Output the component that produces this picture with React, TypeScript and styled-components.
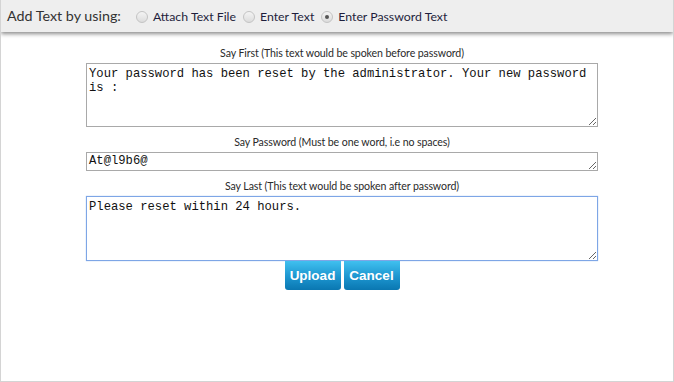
import React from "react";
import styled, { createGlobalStyle } from "styled-components";

const GlobalStyle = createGlobalStyle`
  html, body {
    margin: 0;
    padding: 0;
    background: #ffffff;
  }
  * {
    box-sizing: border-box;
  }
`;

const Frame = styled.div`
  width: 674px;
  height: 382px;
  border: 1px solid #d4d4d4;
  border-top: none;
  background: #ffffff;
  overflow: hidden;
`;

const Header = styled.div`
  height: 32px;
  display: flex;
  align-items: center;
  padding: 0 0 2px 6px;
  background: #eeeeee;
  box-shadow: 0 2px 4px rgba(0, 0, 0, 0.45);
  position: relative;
`;

const HeaderTitle = styled.span`
  font-family: Lato, "Open Sans", sans-serif;
  font-size: 14.3px;
  color: #333333;
  margin-right: 15px;
`;

const Choice = styled.label`
  display: flex;
  align-items: center;
  gap: 5px;
  margin-right: 7px;
  margin-top: 3px;
  font-family: Lato, "Open Sans", sans-serif;
  font-size: 12.3px;
  color: #1e1e3c;
`;

const Radio = styled.input.attrs({ type: "radio" })`
  appearance: none;
  width: 12px;
  height: 12px;
  margin: 0;
  border-radius: 50%;
  border: 1px solid #c4c4c4;
  background: linear-gradient(#f4f4f4, #dcdcdc);
  position: relative;
  &:checked::after {
    content: "";
    position: absolute;
    left: 3px;
    top: 3px;
    width: 4px;
    height: 4px;
    border-radius: 50%;
    background: #555555;
  }
`;

const Form = styled.div`
  width: 512px;
  margin: 14px 0 0 85px;
  display: flex;
  flex-direction: column;
  align-items: stretch;
`;

const FieldLabel = styled.div`
  font-family: Lato, "Open Sans", sans-serif;
  font-size: 10.6px;
  letter-spacing: -0.1px;
  line-height: 14px;
  color: #2a2a2a;
  text-align: center;
  margin: 0 0 3px;
`;

const Field = styled.textarea<{ $height: number; $padTop: number; $focused?: boolean }>`
  display: block;
  width: 512px;
  height: ${(p) => p.$height}px;
  margin: 0 0 8px;
  padding: ${(p) => p.$padTop}px 2px 0;
  font-family: "Liberation Mono", "DejaVu Sans Mono", monospace;
  font-size: 12.2px;
  line-height: 14px;
  color: #111111;
  border: 1px solid ${(p) => (p.$focused ? "#7ea6e6" : "#a9a9a9")};
  box-shadow: ${(p) => (p.$focused ? "0 0 1px #9dbbec" : "none")};
  outline: none;
  resize: both;
  overflow: hidden;
`;

const Buttons = styled.div`
  display: flex;
  justify-content: center;
  gap: 3px;
  margin-top: -8px;
`;

const Button = styled.button`
  width: 56px;
  height: 29px;
  padding: 0;
  border: none;
  border-radius: 0 0 3px 3px;
  background: linear-gradient(#40c0ef, #1c95cf 55%, #0a77b1);
  color: #ffffff;
  font-family: "Liberation Sans", Arial, sans-serif;
  font-weight: bold;
  font-size: 13.5px;
  cursor: pointer;
`;

export default function App() {
  return (
    <>
      <GlobalStyle />
      <Frame>
        <Header>
          <HeaderTitle>Add Text by using:</HeaderTitle>
          <Choice>
            <Radio name="mode" />
            Attach Text File
          </Choice>
          <Choice>
            <Radio name="mode" />
            Enter Text
          </Choice>
          <Choice>
            <Radio name="mode" defaultChecked />
            Enter Password Text
          </Choice>
        </Header>
        <Form>
          <FieldLabel>Say First (This text would be spoken before password)</FieldLabel>
          <Field
            $height={64}
            $padTop={3}
            spellCheck={false}
            defaultValue="Your password has been reset by the administrator. Your new password is :"
          />
          <FieldLabel>Say Password (Must be one word, i.e no spaces)</FieldLabel>
          <Field $height={19} $padTop={1} rows={1} spellCheck={false} defaultValue="At@l9b6@" />
          <FieldLabel>Say Last (This text would be spoken after password)</FieldLabel>
          <Field
            $height={65}
            $padTop={3}
            $focused
            spellCheck={false}
            defaultValue="Please reset within 24 hours."
          />
          <Buttons>
            <Button>Upload</Button>
            <Button>Cancel</Button>
          </Buttons>
        </Form>
      </Frame>
    </>
  );
}
